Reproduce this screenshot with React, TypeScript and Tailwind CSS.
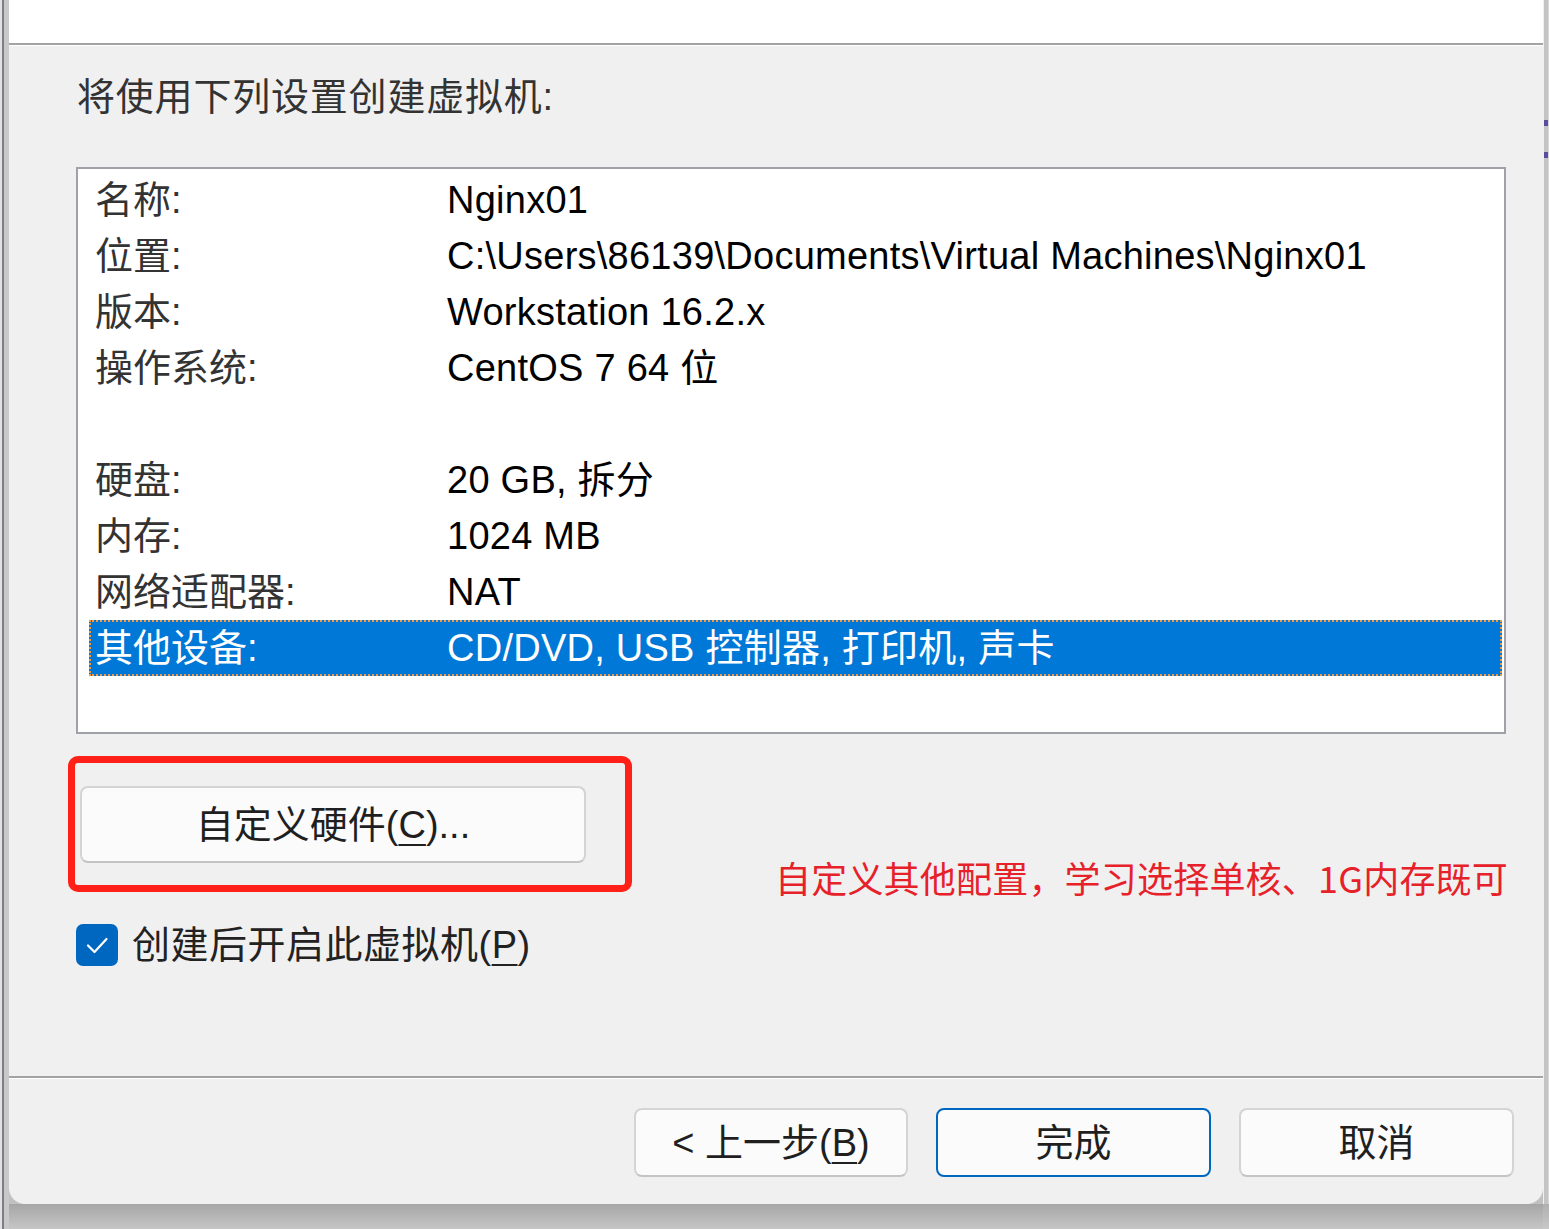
import React from 'react';

const FONT = { fontFamily: '"Liberation Sans", "Noto Sans CJK SC", sans-serif' };
const RED_FONT = { fontFamily: '"Noto Sans CJK SC", "Liberation Sans", sans-serif' };

type Row = { label: string; value: string; selected?: boolean };

const ROWS: Row[] = [
  { label: '名称:', value: 'Nginx01' },
  { label: '位置:', value: 'C:\\Users\\86139\\Documents\\Virtual Machines\\Nginx01' },
  { label: '版本:', value: 'Workstation 16.2.x' },
  { label: '操作系统:', value: 'CentOS 7 64 位' },
  { label: '', value: '' },
  { label: '硬盘:', value: '20 GB, 拆分' },
  { label: '内存:', value: '1024 MB' },
  { label: '网络适配器:', value: 'NAT' },
  { label: '其他设备:', value: 'CD/DVD, USB 控制器, 打印机, 声卡', selected: true },
];

function SummaryRow({ row }: { row: Row }) {
  const base = 'ml-[11px] mr-[2px] h-[56px] flex items-center pl-[4px] border-2';
  return (
    <div
      className={
        row.selected
          ? `${base} bg-[#0078d7] border-dotted border-[#f39b3c] text-white`
          : `${base} border-transparent`
      }
    >
      <div className={row.selected ? 'w-[352px] shrink-0' : 'w-[352px] shrink-0 text-[#333]'}>{row.label}</div>
      <div className={row.selected ? 'whitespace-nowrap tracking-[0.25px]' : 'whitespace-nowrap tracking-[0.25px] text-black'}>
        {row.value}
      </div>
    </div>
  );
}

function WinButton({ children, primary, className = '' }: { children: React.ReactNode; primary?: boolean; className?: string }) {
  return (
    <button
      className={`flex items-center justify-center bg-[#fbfbfb] rounded-[8px] border-2 text-[#1f1f1f] ${
        primary ? 'border-[#0067c0]' : 'border-[#d4d4d4] border-b-[#c4c4c4]'
      } ${className}`}
    >
      {children}
    </button>
  );
}

export default function App() {
  return (
    <div className="w-[1549px] h-[1229px] flex overflow-hidden bg-[#c0c0c0] text-[38px] leading-[40px]" style={FONT}>
      {/* 左侧窗口边缘 */}
      <div className="w-[9px] shrink-0 flex">
        <div className="w-[2px] bg-[#e2e2e2]" />
        <div className="w-[2px] bg-[#7c7f85]" />
        <div className="flex-1 bg-[#c8c8c8]" />
      </div>

      <div className="w-[1534px] shrink-0 flex flex-col">
        {/* 对话框 */}
        <div className="h-[1204px] shrink-0 bg-[#f0f0f0] rounded-b-[16px] flex flex-col overflow-hidden">
          <div className="h-[43px] shrink-0 bg-white" />
          <div className="h-[2px] shrink-0 bg-[#a3a3a3]" />
          <div className="h-[1px] shrink-0 bg-white" />

          <div className="flex-1 flex flex-col pl-[67px]">
            <div className="mt-[31px] pl-[1px] text-[#333] tracking-[0.8px]">将使用下列设置创建虚拟机:</div>

            {/* 设置列表 */}
            <div className="mt-[50px] w-[1430px] h-[567px] border-2 border-[#9fa2a6] bg-white pt-[3px]">
              {ROWS.map((row, i) => (
                <SummaryRow key={i} row={row} />
              ))}
            </div>

            {/* 自定义硬件 + 批注 */}
            <div className="mt-[52px] w-[1432px] h-[116px] flex justify-between">
              <div className="relative ml-[4px]">
                <WinButton className="w-[506px] h-[77px]">
                  <span>
                    自定义硬件(<span className="underline underline-offset-[6px] decoration-2">C</span>)...
                  </span>
                </WinButton>
                <div className="absolute left-[-12px] top-[-30px] w-[564px] h-[136px] border-[7px] border-[#ff2018] rounded-[10px]" />
              </div>
              <div className="mt-[66px] h-[50px] leading-[50px] text-[36px] tracking-[0.2px] text-[#e62129]" style={RED_FONT}>
                自定义其他配置，学习选择单核、1G内存既可
              </div>
            </div>

            {/* 创建后开启 */}
            <div className="mt-[22px] flex items-center h-[42px]">
              <div className="w-[42px] h-[42px] rounded-[7px] bg-[#0067c0] flex items-center justify-center">
                <svg width="42" height="42" viewBox="0 0 42 42" fill="none">
                  <path d="M12 21.5 L18.5 28 L30.5 15" stroke="white" strokeWidth="2.2" strokeLinecap="round" strokeLinejoin="round" />
                </svg>
              </div>
              <span className="ml-[14px] text-[#222] tracking-[0.5px]">
                创建后开启此虚拟机(<span className="underline underline-offset-[6px] decoration-2">P</span>)
              </span>
            </div>
          </div>

          <div className="h-[2px] shrink-0 bg-[#a3a3a3]" />
          <div className="h-[1px] shrink-0 bg-white" />

          {/* 底部按钮 */}
          <div className="h-[125px] shrink-0 flex justify-end gap-[28px] pr-[29px] pt-[29px]">
            <WinButton className="w-[274px] h-[69px]">
              <span>
                &lt; 上一步(<span className="underline underline-offset-[6px] decoration-2">B</span>)
              </span>
            </WinButton>
            <WinButton primary className="w-[275px] h-[69px]">
              完成
            </WinButton>
            <WinButton className="w-[275px] h-[69px]">
              取消
            </WinButton>
          </div>
        </div>
        <div className="flex-1 bg-gradient-to-b from-[#a6a6a6] to-[#c6c6c6]" />
      </div>

      {/* 右侧边缘 */}
      <div className="flex-1 flex flex-col">
        <div className="h-[1204px] shrink-0 flex">
          <div className="w-[1px] bg-[#f0f0f0]" />
          <div className="w-[4px] bg-[#c4c4c4] flex flex-col">
            <div className="mt-[120px] h-[6px] bg-[#5a4e9c]" />
            <div className="mt-[26px] h-[6px] bg-[#5a4e9c]" />
          </div>
          <div className="flex-1 bg-[#d8d8d8]" />
        </div>
        <div className="flex-1 bg-gradient-to-b from-[#b0b0b0] to-[#c8c8c8]" />
      </div>
    </div>
  );
}
